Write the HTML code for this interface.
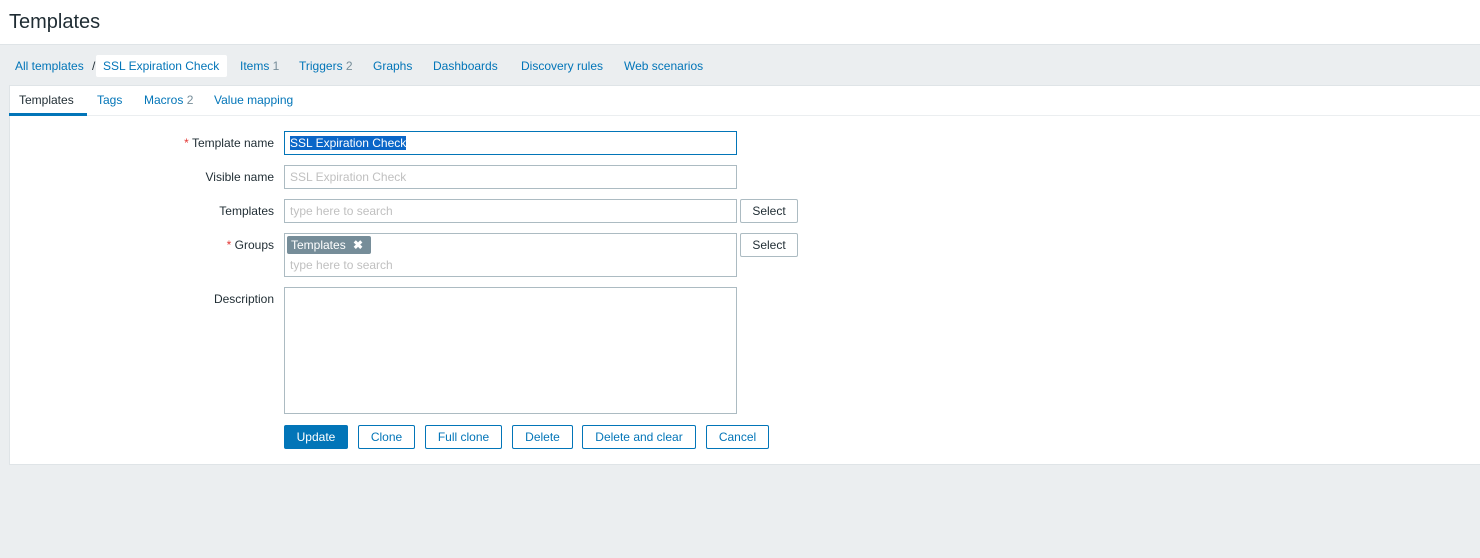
<!DOCTYPE html><html><head><style>
body{margin:0;width:1480px;height:558px;background:#ebeef0;font-family:"Liberation Sans",Arial,sans-serif;font-size:12px;color:#1f2c33;position:relative;overflow:hidden}
.a{position:absolute}
.hdr{left:0;top:0;width:1480px;height:44px;background:#fff;border-bottom:1px solid #dfe4e7}
.lnk{color:#0275b8}
.cnt{color:#768d99}
.panel{left:9px;top:85px;width:1480px;height:378px;background:#fff;border:1px solid #dfe4e7}
.inp{border:1px solid #acbbc2;background:#fff;box-sizing:border-box;height:24px;width:453px;left:284px;padding:4px 5px;color:#c0c0c0}
.lbl{right:1206px;text-align:right;white-space:nowrap}
.req{color:#e33734}
.sel{left:740px;width:58px;height:24px;box-sizing:border-box;border:1px solid #acbbc2;background:#fff;text-align:center;line-height:22px;border-radius:2px}
.btn{top:425px;height:24px;box-sizing:border-box;border:1px solid #0275b8;color:#0275b8;background:#fff;text-align:center;line-height:22px;border-radius:2px}
</style></head><body>
<div class="a hdr"><div class="a" style="left:9px;top:11px;font-size:20px;color:#1f2c33">Templates</div></div>
<div class="a" style="top:59px;left:15px;white-space:nowrap"><span class="lnk">All templates</span></div>
<div class="a" style="top:59px;left:92px">/</div>
<div class="a" style="top:55px;left:96px;width:131px;height:22px;background:#fff;border-radius:2px"></div>
<div class="a lnk" style="top:59px;left:103px">SSL Expiration Check</div>
<div class="a lnk" style="top:59px;left:240px">Items <span class="cnt">1</span></div>
<div class="a lnk" style="top:59px;left:299px">Triggers <span class="cnt">2</span></div>
<div class="a lnk" style="top:59px;left:373px">Graphs</div>
<div class="a lnk" style="top:59px;left:433px">Dashboards</div>
<div class="a lnk" style="top:59px;left:521px">Discovery rules</div>
<div class="a lnk" style="top:59px;left:624px">Web scenarios</div>
<div class="a panel"></div>
<div class="a" style="left:10px;top:115px;width:1470px;height:1px;background:#ebeef0"></div>
<div class="a" style="left:19px;top:93px">Templates</div>
<div class="a" style="left:9px;top:113px;width:78px;height:3px;background:#0275b8"></div>
<div class="a lnk" style="left:97px;top:93px">Tags</div>
<div class="a lnk" style="left:144px;top:93px">Macros <span class="cnt">2</span></div>
<div class="a lnk" style="left:214px;top:93px">Value mapping</div>

<div class="a lbl" style="top:136px"><span class="req">*</span> Template name</div>
<div class="a inp" style="top:131px;border-color:#0275b8;color:#fff"><span style="background:#0a66c8;color:#fff">SSL Expiration Check</span></div>
<div class="a lbl" style="top:170px">Visible name</div>
<div class="a inp" style="top:165px">SSL Expiration Check</div>
<div class="a lbl" style="top:204px">Templates</div>
<div class="a inp" style="top:199px">type here to search</div>
<div class="a sel" style="top:199px">Select</div>
<div class="a lbl" style="top:238px"><span class="req">*</span> Groups</div>
<div class="a inp" style="top:233px;height:44px"></div>
<div class="a" style="left:287px;top:236px;width:84px;height:18px;background:#768d99;color:#fff;border-radius:2px;line-height:18px;padding-left:4px;box-sizing:border-box">Templates <b style="margin-left:4px">✖</b></div>
<div class="a" style="left:290px;top:258px;color:#c0c0c0">type here to search</div>
<div class="a sel" style="top:233px">Select</div>
<div class="a lbl" style="top:292px">Description</div>
<div class="a inp" style="top:287px;height:127px"></div>
<div class="a btn" style="left:284px;width:64px;background:#0275b8;color:#fff">Update</div>
<div class="a btn" style="left:358px;width:57px">Clone</div>
<div class="a btn" style="left:425px;width:77px">Full clone</div>
<div class="a btn" style="left:512px;width:61px">Delete</div>
<div class="a btn" style="left:582px;width:114px">Delete and clear</div>
<div class="a btn" style="left:706px;width:63px">Cancel</div>
</body></html>
